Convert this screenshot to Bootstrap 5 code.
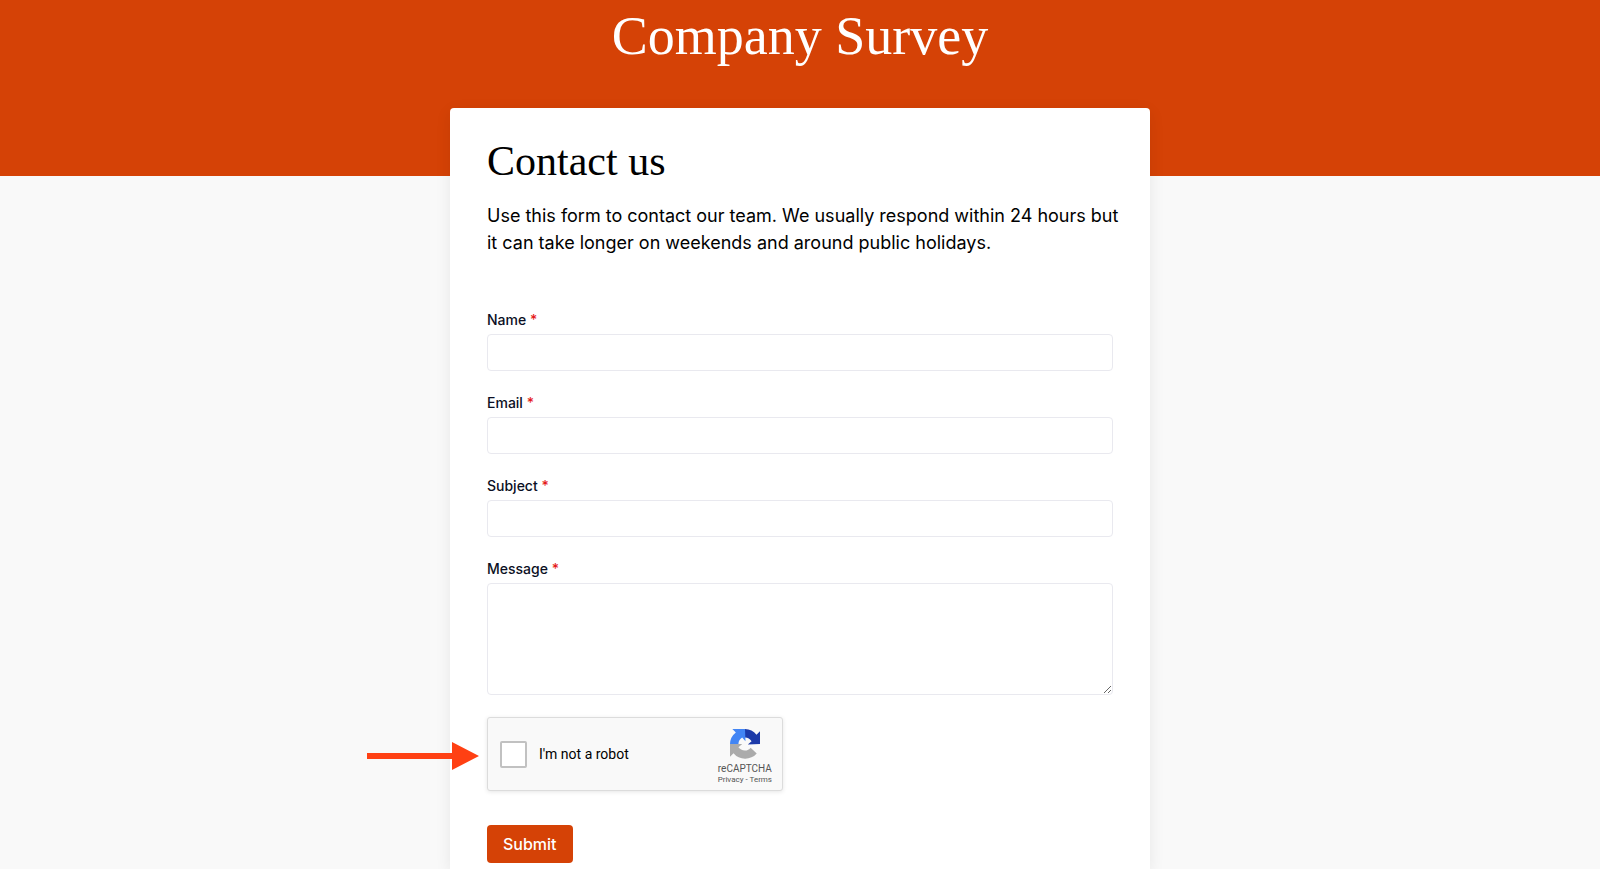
<!DOCTYPE html>
<html lang="en">
<head>
<meta charset="utf-8">
<meta name="viewport" content="width=device-width, initial-scale=1">
<title>Company Survey</title>
<link rel="stylesheet" href="https://cdn.jsdelivr.net/npm/bootstrap@5.3.0/dist/css/bootstrap.min.css">
<style>
  :root { --brand: #d54206; }
  body { font-family: Inter, "Liberation Sans", sans-serif; background: #f9f9f9; color: #000; }
  h1, h2 { font-family: "Liberation Serif", serif; font-weight: 400; }
  .survey-header { background: var(--brand); padding-bottom: 104px; }
  .survey-header h1 { font-size: 54px; line-height: 72px; }
  .survey-panel { width: 100%; max-width: 700px; margin-top: -68px; padding: 29px 37px 4px; border-radius: 4px 4px 0 0; box-shadow: 0 4px 16px rgba(0, 0, 0, .08); }
  .survey-panel h2 { font-size: 42px; line-height: 48px; margin-bottom: 17px; }
  .intro { font-size: 18px; line-height: 27px; margin: 0 -8px 54px 0; }
  .form-label { font-size: 14px; line-height: 20px; font-weight: 500; color: #0b0f24; margin-bottom: 4px; }
  .required { color: #e51b1b; }
  .form-control { border-color: #e9e9ef; border-radius: 4px; height: 37px; }
  .field { margin-bottom: 22px; }
  textarea.form-control { height: 112px; resize: vertical; }
  .captcha { width: 296px; height: 74px; padding: 0 10px 0 12px; background: #f9f9f9; border: 1px solid #dcdcdc; border-radius: 3px; box-shadow: 0 1px 4px rgba(0, 0, 0, .1); margin-bottom: 34px; }
  .captcha .form-check-input { width: 27px; height: 27px; border: 2px solid #c1c1c1; border-radius: 2px; }
  .captcha label { font-family: Roboto, sans-serif; font-size: 14px; }
  .captcha-brand { font-family: Roboto, sans-serif; font-size: 10px; line-height: 13px; color: #555; padding-top: 11px; }
  .captcha-brand svg { margin-bottom: 3px; }
  .captcha-brand small { font-size: 8px; line-height: 10px; }
  .captcha-brand a { color: inherit; text-decoration: none; }
  .pointer { right: calc(100% + 9px); top: 24px; }
  .btn-submit { --bs-btn-bg: var(--brand); --bs-btn-color: #fff; --bs-btn-hover-bg: #b93804; --bs-btn-hover-color: #fff; font-size: 16px; line-height: 24px; font-weight: 500; padding: 6px 15px; border-radius: 4px; }
</style>
</head>
<body class="d-flex flex-column min-vh-100">
<header class="survey-header text-center text-white">
  <h1 class="m-0">Company Survey</h1>
</header>
<main class="survey-panel bg-white mx-auto flex-grow-1">
  <h2>Contact us</h2>
  <p class="intro">Use this form to contact our team. We usually respond within 24 hours but it can take longer on weekends and around public holidays.</p>
  <form>
    <div class="field">
      <label class="form-label d-block" for="name">Name <span class="required">*</span></label>
      <input class="form-control" id="name" type="text" required>
    </div>
    <div class="field">
      <label class="form-label d-block" for="email">Email <span class="required">*</span></label>
      <input class="form-control" id="email" type="email" required>
    </div>
    <div class="field">
      <label class="form-label d-block" for="subject">Subject <span class="required">*</span></label>
      <input class="form-control" id="subject" type="text" required>
    </div>
    <div class="field">
      <label class="form-label d-block" for="message">Message <span class="required">*</span></label>
      <textarea class="form-control" id="message" required></textarea>
    </div>
    <div class="captcha position-relative d-flex align-items-center">
      <svg class="pointer position-absolute" width="112" height="28" viewBox="0 0 112 28" aria-hidden="true"><path d="M0 11h85V0l27 14-27 14V17H0z" fill="#ff4013"/></svg>
      <input class="form-check-input m-0 flex-shrink-0" type="checkbox" id="robot">
      <label class="ms-2 ps-1" for="robot">I'm not a robot</label>
      <div class="captcha-brand ms-auto align-self-start d-flex flex-column align-items-center">
        <svg width="30" height="30" viewBox="0 0 64 64" aria-hidden="true">
          <path fill="#1c3aa9" d="M64 32V5l-7.500 7.500A32 32 0 0 0 32 0v18c6 0 11 3 14 8l-8 7z"/>
          <path fill="#4285f4" d="M32 0H5l7.500 7.500A32 32 0 0 0 0 32h18c0-6 3-11 8-14l7 8z"/>
          <path fill="#ababab" d="M0 32v27l7.500-7.500A32 32 0 0 0 57 52L44 40c-3 4-7 6-12 6-6 0-11-3-14-7l8-7z"/>
        </svg>
        <span>reCAPTCHA</span>
        <small><a href="#">Privacy</a> - <a href="#">Terms</a></small>
      </div>
    </div>
    <button class="btn btn-submit d-block" type="submit">Submit</button>
  </form>
</main>
<script src="https://cdn.jsdelivr.net/npm/bootstrap@5.3.0/dist/js/bootstrap.bundle.min.js"></script>
</body>
</html>
